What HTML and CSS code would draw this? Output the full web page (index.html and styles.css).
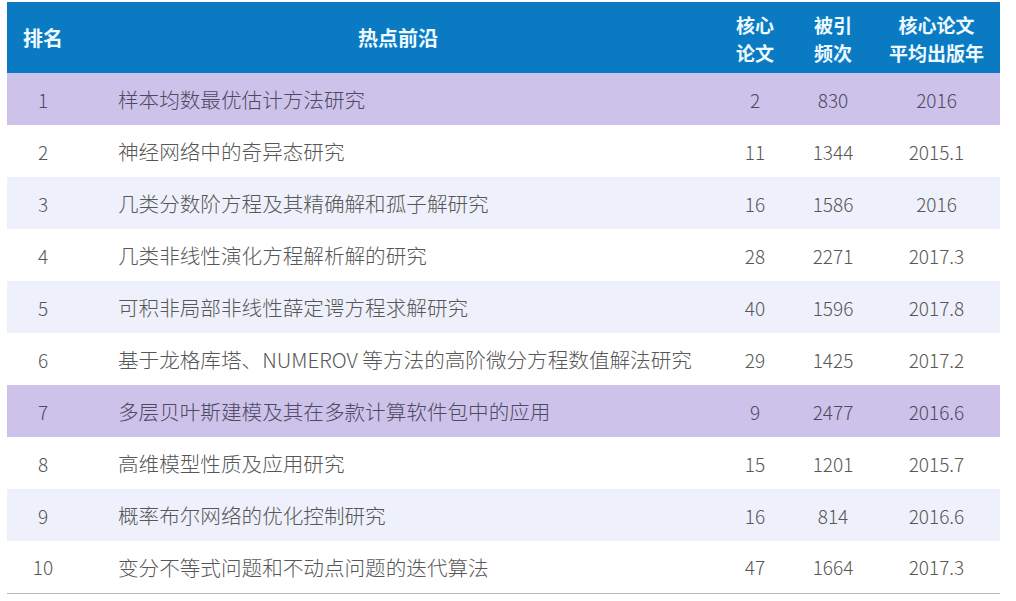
FILE: index.html
```html
<!DOCTYPE html>
<html lang="zh-CN">
<head>
<meta charset="utf-8">
<title>热点前沿</title>
<link rel="stylesheet" href="styles.css">
</head>
<body>
<div class="wrap">
<table class="hot">
  <colgroup>
    <col class="c-rank">
    <col class="c-topic">
    <col class="c-core">
    <col class="c-cite">
    <col class="c-year">
  </colgroup>
  <thead>
    <tr>
      <th>排名</th>
      <th>热点前沿</th>
      <th class="two"><span class="ln">核心</span><span class="ln">论文</span></th>
      <th class="two"><span class="ln">被引</span><span class="ln">频次</span></th>
      <th class="two"><span class="ln">核心论文</span><span class="ln">平均出版年</span></th>
    </tr>
  </thead>
  <tbody>
    <tr class="hl"><td>1</td><td class="topic">样本均数最优估计方法研究</td><td>2</td><td>830</td><td>2016</td></tr>
    <tr><td>2</td><td class="topic">神经网络中的奇异态研究</td><td>11</td><td>1344</td><td>2015.1</td></tr>
    <tr class="alt"><td>3</td><td class="topic">几类分数阶方程及其精确解和孤子解研究</td><td>16</td><td>1586</td><td>2016</td></tr>
    <tr><td>4</td><td class="topic">几类非线性演化方程解析解的研究</td><td>28</td><td>2271</td><td>2017.3</td></tr>
    <tr class="alt"><td>5</td><td class="topic">可积非局部非线性薛定谔方程求解研究</td><td>40</td><td>1596</td><td>2017.8</td></tr>
    <tr><td>6</td><td class="topic">基于龙格库塔、NUMEROV 等方法的高阶微分方程数值解法研究</td><td>29</td><td>1425</td><td>2017.2</td></tr>
    <tr class="hl"><td>7</td><td class="topic">多层贝叶斯建模及其在多款计算软件包中的应用</td><td>9</td><td>2477</td><td>2016.6</td></tr>
    <tr><td>8</td><td class="topic">高维模型性质及应用研究</td><td>15</td><td>1201</td><td>2015.7</td></tr>
    <tr class="alt"><td>9</td><td class="topic">概率布尔网络的优化控制研究</td><td>16</td><td>814</td><td>2016.6</td></tr>
    <tr class="last"><td>10</td><td class="topic">变分不等式问题和不动点问题的迭代算法</td><td>47</td><td>1664</td><td>2017.3</td></tr>
  </tbody>
</table>
</div>
</body>
</html>
```

FILE: styles.css
```css
html, body {
  margin: 0;
  padding: 0;
  background: #ffffff;
}

.wrap {
  padding: 2px 16px 0 7px;
}

.hot {
  width: 993px;
  border-collapse: collapse;
  table-layout: fixed;
  font-family: "Noto Sans CJK SC", "Noto Sans", sans-serif;
}

.c-rank { width: 72px; }
.c-topic { width: 638px; }
.c-core { width: 76px; }
.c-cite { width: 80px; }
.c-year { width: 127px; }

.hot thead tr {
  background: #0a7bc3;
  height: 71px;
}

.hot th {
  color: #eef9ff;
  font-weight: 700;
  font-size: 20px;
  line-height: 26px;
  text-align: center;
  vertical-align: middle;
  padding: 0;
}

.hot th.two {
  font-size: 19px;
  padding-top: 2px;
}

.hot th .ln {
  display: block;
  line-height: 28px;
}

.hot tbody tr {
  height: 52px;
  background: #ffffff;
}

.hot tbody tr.hl {
  background: #cdc3ea;
}

.hot tbody tr.alt {
  background: #eef1fb;
}

.hot tbody tr.last {
  border-bottom: 1px solid #b9b9b9;
}

.hot td {
  color: #575757;
  font-size: 19px;
  font-weight: 300;
  text-align: center;
  vertical-align: middle;
  padding: 0;
  white-space: nowrap;
}

.hot tr.hl td {
  color: #4e4a62;
}

.hot td.topic {
  text-align: left;
  padding-left: 39px;
  font-size: 20.6px;
}
```
